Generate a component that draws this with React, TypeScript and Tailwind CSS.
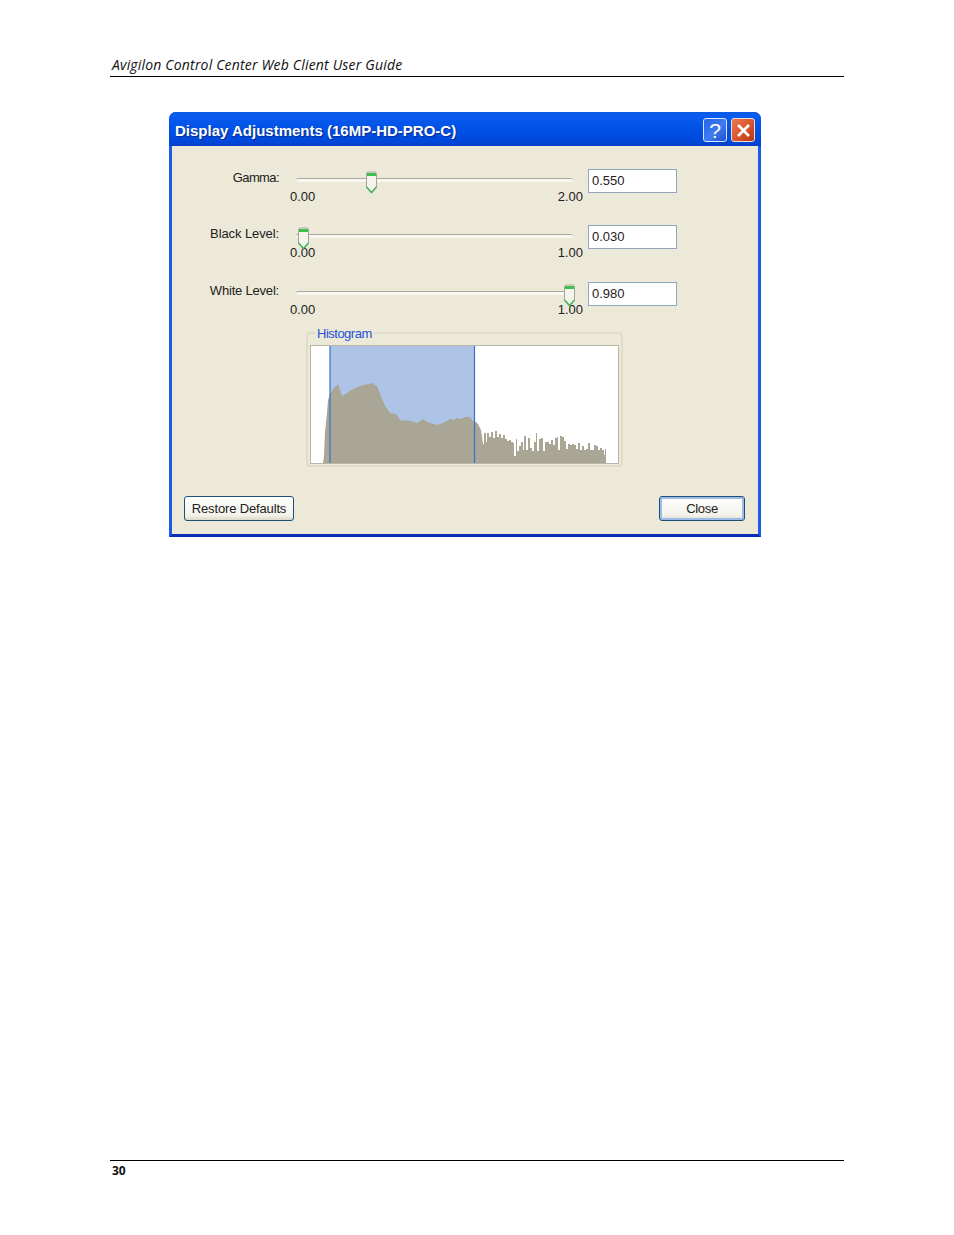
const sliders = [
  { label: 'Gamma:', min: '0.00', max: '2.00', value: '0.550', thumb: 69, labelTrack: 'tracking-[-0.6px]' },
  { label: 'Black Level:', min: '0.00', max: '1.00', value: '0.030', thumb: 1, labelTrack: 'tracking-[-0.1px]' },
  { label: 'White Level:', min: '0.00', max: '1.00', value: '0.980', thumb: 267, labelTrack: 'tracking-[-0.2px]' },
];

// histogram outline in page pixels, traced from the picture
const smoothPart = [
  [323, 462], [324, 455], [325, 431], [327, 412], [328, 399], [330, 393], [333, 388], [338, 383], [342, 395], [347, 392],
  [353, 388], [360, 385], [372, 382], [377, 385], [380, 393], [385, 405], [390, 412], [396, 413], [401, 420], [405, 419], [410, 420],
  [414, 421], [417, 422], [420, 420], [423, 418], [427, 421], [430, 422], [434, 423], [437, 424], [443, 422], [447, 420], [450, 418], [453, 419], [457, 417], [461, 418], [465, 416], [470, 416], [473, 420],
  [476, 421], [478, 423], [481, 429],
];
const spikyPart = [
  [483, 443], [484, 432], [486, 441], [487, 432], [489, 436], [491, 431], [493, 437],
  [495, 430], [497, 436], [499, 433], [501, 437], [503, 434], [505, 438], [507, 440], [509, 439], [511, 441], [513, 442],
  [514, 455], [516, 438], [517, 450], [519, 445], [521, 441], [523, 449], [524, 435], [526, 449], [528, 437], [530, 447],
  [532, 450], [534, 441], [536, 432], [537, 450], [539, 438], [541, 437], [543, 450], [545, 441], [547, 441], [549, 443],
  [551, 439], [553, 444], [555, 437], [557, 436], [558, 449], [560, 435], [562, 436], [564, 440], [566, 448], [568, 443],
  [570, 444], [572, 443], [574, 444], [576, 448], [578, 442], [580, 449], [582, 445], [584, 449], [586, 448], [588, 442],
  [590, 449], [592, 449], [594, 444], [596, 445], [598, 449], [600, 447], [602, 449], [604, 454], [605, 448], [606, 462],
];

function Thumb({ left }: { left: number }) {
  return (
    <svg className="absolute top-[-8px]" style={{ left }} width="13" height="23" viewBox="0 0 13 23">
      <path d="M1.5 3 Q1.5 1 3.5 1 H9.5 Q11.5 1 11.5 3 V16 L6.5 21.5 L1.5 16 Z" fill="#f4f3ec" stroke="#a3a79a" />
      <path d="M2 2 H11 V5 H2 Z" fill="#3fbf4e" />
      <path d="M1.5 16 L6.5 21.5 L11.5 16" fill="none" stroke="#45b25a" strokeWidth="1.6" />
    </svg>
  );
}

function SliderRow({ label, min, max, value, thumb, labelTrack }: (typeof sliders)[number]) {
  return (
    <div className="flex h-[56.4px]">
      <div className={`w-[107px] pt-[1px] text-right text-[13px] leading-[16px] text-[#222] ${labelTrack}`}>{label}</div>
      <div className="ml-[11px] w-[293px]">
        <div className="relative ml-[6px] mt-[9px] h-[4px] w-[277px] rounded-[2px] border-t border-[#a9a99f] bg-[#f8f7f0]">
          <Thumb left={thumb} />
        </div>
        <div className="mt-[7px] flex justify-between text-[13px] leading-[16px] text-[#222]">
          <span>{min}</span>
          <span>{max}</span>
        </div>
      </div>
      <div className="ml-[5px] h-[24px] w-[89px] border border-[#8fa8bd] bg-white pl-[3px] text-[13px] leading-[22px] text-[#222]">
        {value}
      </div>
    </div>
  );
}

function HelpButton() {
  return (
    <div className="flex h-[24px] w-[24px] items-center justify-center rounded-[3px] border border-[#dbe6fb] bg-[linear-gradient(135deg,#2a63e8,#3f7bf0_55%,#1c4fd0)] text-[21px] leading-none text-white">
      ?
    </div>
  );
}

function CloseButton() {
  return (
    <div className="flex h-[24px] w-[24px] items-center justify-center rounded-[3px] border border-[#f0ddd5] bg-[linear-gradient(135deg,#e8794f,#d9532c_55%,#b8350f)]">
      <svg width="15" height="15" viewBox="0 0 15 15">
        <path d="M2 2 L13 13 M13 2 L2 13" stroke="#fff" strokeWidth="2.6" />
      </svg>
    </div>
  );
}

function Histogram() {
  const stepped = spikyPart.flatMap(([x, y], i) => {
    const next = spikyPart[i + 1];
    return next ? [[x, y], [next[0], y]] : [[x, y]];
  });
  const outline = [...smoothPart, ...stepped].map(([x, y]) => `${x},${y}`).join(' ');
  return (
    <div className="relative ml-[134px] mt-[-6px] h-[135px] w-[317px] rounded-[4px] border-2 border-[#dfdcc9] p-[2px]">
      <span className="absolute left-[7px] top-[-8px] bg-[#ece9d8] px-[2px] text-[13px] leading-[16px] tracking-[-0.5px] text-[#1c50d8]">
        Histogram
      </span>
      <svg className="mt-[9px] block border border-[#b9b6a6]" width="309" height="119" viewBox="311 345 307 117">
        <rect x="311" y="345" width="307" height="117" fill="#fff" />
        <rect x="330" y="345" width="144" height="117" fill="#aec4e6" />
        <polygon points={outline} fill="#aaa695" />
        <path d="M330 345 V462 M474.5 345 V462" stroke="#3a6fd0" strokeWidth="1.2" />
      </svg>
    </div>
  );
}

export default function App() {
  return (
    <div className="flex h-[1235px] flex-col bg-white px-[110px] font-['Liberation_Sans',sans-serif]">
      <div className="mt-[56px] border-b border-black pb-[2px] pl-[2px] font-['Open_Sans',sans-serif] text-[14px] italic leading-[18px] tracking-[0.18px] text-[#111]">
        Avigilon Control Center Web Client User Guide
      </div>

      <div className="ml-[59px] mt-[35px] w-[592px] overflow-hidden rounded-t-[7px] bg-[#0a3dd8]">
        <div className="flex h-[34px] items-center justify-between bg-[linear-gradient(180deg,#0b5be0_0%,#0a5cf0_12%,#0052e6_50%,#0048dc_85%,#0a3fc8_100%)] pl-[6px] pr-[6px]">
          <span className="mt-[4px] text-[15px] font-bold text-white [text-shadow:1px_1px_1px_#0b2a90]">
            Display Adjustments (16MP-HD-PRO-C)
          </span>
          <div className="mt-[2px] flex gap-[4px]">
            <HelpButton />
            <CloseButton />
          </div>
        </div>
        <div className="border-x-[3px] border-b-[3px] border-x-[#1a5de8] border-b-[#0a2fb8]">
          <div className="h-[388px] bg-[#ece9d8] pt-[23px]">
            {sliders.map((s) => (
              <SliderRow key={s.label} {...s} />
            ))}
            <Histogram />
            <div className="ml-[12px] mr-[13px] mt-[29px] flex justify-between">
              <button className="h-[25px] w-[110px] rounded-[3px] border border-[#1f4f78] bg-[linear-gradient(180deg,#ffffff,#f3f2ea_80%,#dcd8c8)] text-[13px] leading-[22px] tracking-[-0.15px] text-[#222]">
                Restore Defaults
              </button>
              <button className="h-[25px] w-[86px] rounded-[3px] border border-[#1f4f78] bg-[linear-gradient(180deg,#ffffff,#f3f2ea_80%,#dcd8c8)] text-[13px] leading-[20px] tracking-[-0.3px] text-[#222] shadow-[inset_0_0_0_2px_#9dbbe8]">
                Close
              </button>
            </div>
          </div>
        </div>
      </div>

      <div className="mt-auto mb-[56px] border-t border-black pl-[2px] pt-[2px] font-['Open_Sans',sans-serif] text-[12px] font-bold leading-[16px] text-[#111]">
        30
      </div>
    </div>
  );
}
